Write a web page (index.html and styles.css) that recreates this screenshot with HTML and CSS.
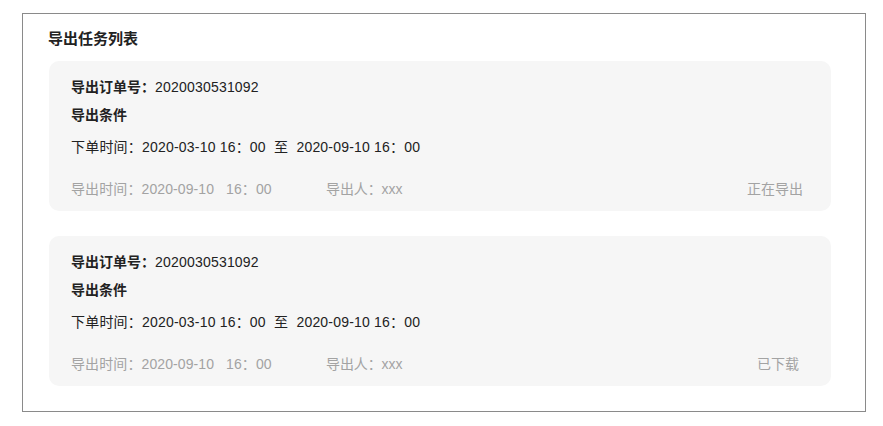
FILE: index.html
```html
<!DOCTYPE html>
<html>
<head>
  <meta charset="utf-8">
  <title>导出任务列表</title>
  <link rel="stylesheet" href="styles.css">
</head>
<body>
  <div class="panel">
    <h2 class="panel-title">导出任务列表</h2>

    <div class="task">
      <div class="task-row"><b>导出订单号：</b>2020030531092</div>
      <div class="task-row task-cond"><b>导出条件</b></div>
      <div class="task-row task-range">下单时间：2020-03-10 16：00 &nbsp;至&nbsp; 2020-09-10 16：00</div>
      <div class="task-foot">
        <span class="foot-time">导出时间：2020-09-10 &nbsp; 16：00</span>
        <span class="foot-user">导出人：xxx</span>
        <span class="foot-status">正在导出</span>
      </div>
    </div>

    <div class="task">
      <div class="task-row"><b>导出订单号：</b>2020030531092</div>
      <div class="task-row task-cond"><b>导出条件</b></div>
      <div class="task-row task-range">下单时间：2020-03-10 16：00 &nbsp;至&nbsp; 2020-09-10 16：00</div>
      <div class="task-foot">
        <span class="foot-time">导出时间：2020-09-10 &nbsp; 16：00</span>
        <span class="foot-user">导出人：xxx</span>
        <span class="foot-status done">已下载</span>
      </div>
    </div>
  </div>
</body>
</html>
```

FILE: styles.css
```css
body {
  margin: 0;
  background: #fff;
  font-family: "Liberation Sans", "Noto Sans CJK SC", sans-serif;
  font-size: 14px;
  line-height: 20px;
  color: #222;
}

.panel {
  box-sizing: border-box;
  width: 844px;
  height: 399px;
  margin: 13px 0 0 22px;
  padding: 15px 34px 0 26px;
  border: 1px solid #8a8a8a;
}

.panel-title {
  margin: 0 0 12px -1px;
  font-size: 15px;
  line-height: 20px;
  font-weight: bold;
  color: #222;
}

.task {
  height: 150px;
  box-sizing: border-box;
  padding: 16px 28px 0 22px;
  margin-bottom: 25px;
  background: #f6f6f6;
  border-radius: 10px;
}

.task-row {
  letter-spacing: 0.2px;
}

.task-row b {
  font-weight: bold;
  letter-spacing: 0;
}

.task-cond {
  margin-top: 8px;
}

.task-range {
  margin-top: 12px;
}

.task-foot {
  display: flex;
  margin-top: 22px;
  color: #a3a3a3;
}

.foot-time {
  width: 255px;
  letter-spacing: 0.1px;
}

.foot-user {
  letter-spacing: -0.1px;
}

.foot-status {
  margin-left: auto;
}

.foot-status.done {
  margin-right: 4px;
}
```
